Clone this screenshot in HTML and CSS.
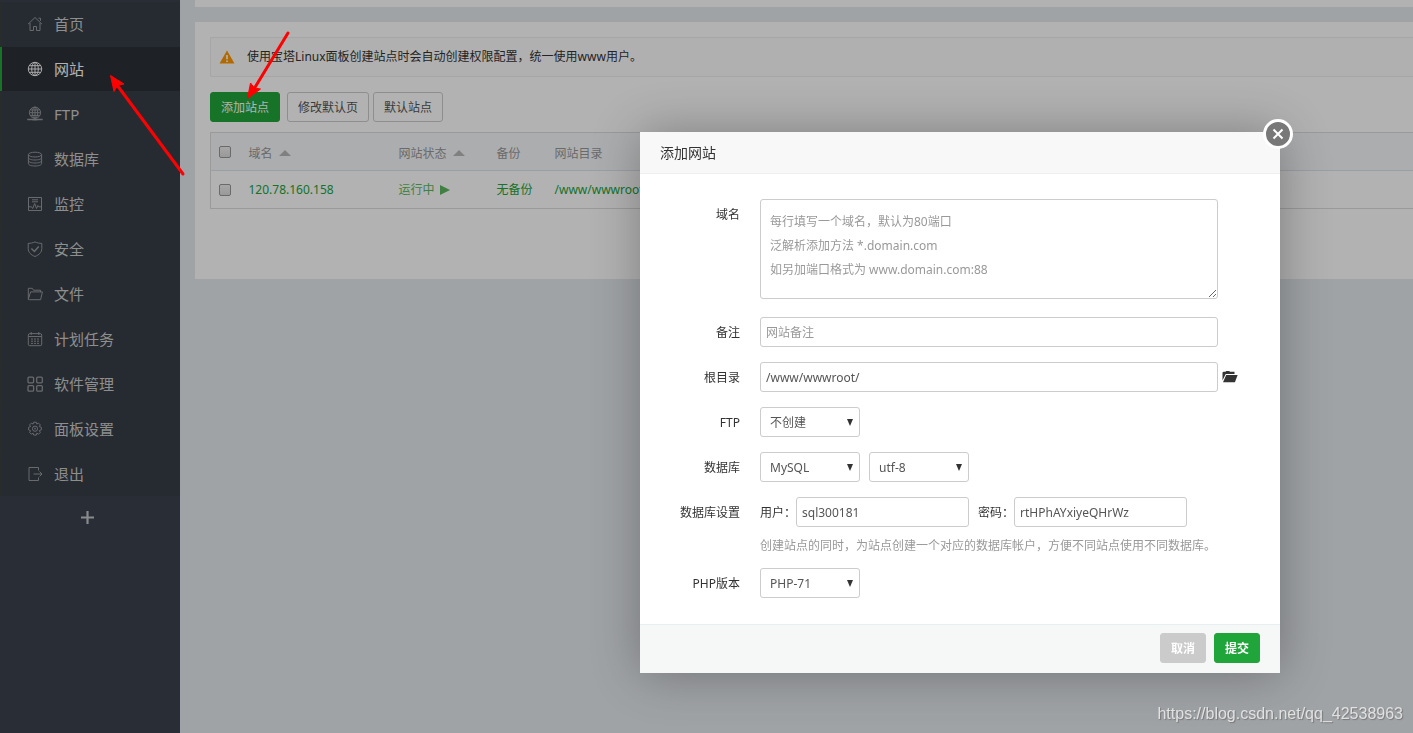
FILE: index.html
```html
<!DOCTYPE html>
<html lang="zh-CN">
<head>
<meta charset="utf-8">
<meta name="viewport" content="width=device-width, initial-scale=1">
<title>网站</title>
<link rel="stylesheet" href="styles.css">
</head>
<body>
<div class="app">
  <nav class="sidebar">
    <ul class="menu">
      <li><a href="#"><svg class="icon" viewBox="0 0 16 16"><path d="M1 8.2 8 1.5l7 6.7M3 7v7.5h3.5v-4h3v4H13V7M11.5 2.2h2v2.6"/></svg>首页</a></li>
      <li><a href="#" class="active"><svg class="icon" viewBox="0 0 16 16"><circle cx="8" cy="8" r="6.7"/><ellipse cx="8" cy="8" rx="3.3" ry="6.7"/><path d="M1.3 8h13.4M8 1.3v13.4M2.4 4.7h11.2M2.4 11.3h11.2"/></svg>网站</a></li>
      <li><a href="#"><svg class="icon" viewBox="0 0 16 16"><circle cx="8" cy="6.7" r="5.6"/><ellipse cx="8" cy="6.7" rx="2.7" ry="5.6"/><path d="M2.4 6.7h11.2M8 1.1v11.2M3.4 4h9.2M3.4 9.4h9.2"/><path class="thick" d="M.3 13.6h15.4M5.5 13.8h5"/></svg>FTP</a></li>
      <li><a href="#"><svg class="icon" viewBox="0 0 16 16"><ellipse cx="8" cy="3.6" rx="6.6" ry="2.4"/><path d="M1.4 3.6v9c0 1.4 2.8 2.4 6.6 2.4s6.600-1 6.600-2.400v-9M1.400 6.600C1.400 8 4.200 9 8 9s6.600-1 6.600-2.400M1.400 9.600C1.400 11 4.200 12 8 12s6.600-1 6.600-2.400"/></svg>数据库</a></li>
      <li><a href="#"><svg class="icon" viewBox="0 0 16 16"><path d="M1.5 1.5h13v13h-13zM5 3.8h6M5 5.800h6M1.500 10.800h3l1.200 1.700 2-5 1.800 5 1.300-3 1 1.300h2.700"/></svg>监控</a></li>
      <li><a href="#"><svg class="icon" viewBox="0 0 16 16"><path d="M8 .9c2 1 4.300 1.400 6.800 1.500v5.100c0 3.900-2.700 6.400-6.800 8-4.100-1.600-6.800-4.100-6.800-8V2.400C3.700 2.300 6 1.900 8 .9z"/><path class="thick" d="m4.400 7.500 3 3 4.300-4.900"/></svg>安全</a></li>
      <li><a href="#"><svg class="icon" viewBox="0 0 16 16"><path d="M1.300 13V2.300h4l1.200 1.900h7v2M1.300 13.300 3.600 5.900h11.800l-1.800 7.800H2.200c-.6 0-.9-.2-.9-.7"/></svg>文件</a></li>
      <li><a href="#"><svg class="icon" viewBox="0 0 16 16"><rect x="1.300" y="2.600" width="13.400" height="12.100" rx="1.500"/><path d="M1.300 5.500h13.400M4.200 1v3M11.800 1v3M4 8h2M7 8h2M10 8h2M4 10.200h2M7 10.200h2M10 10.200h2M4 12.400h2M7 12.400h2M10 12.400h2"/></svg>计划任务</a></li>
      <li><a href="#"><svg class="icon icon-bold" viewBox="0 0 16 16"><rect x="1" y="1.200" width="5.600" height="5.600" rx="1"/><rect x="9.700" y="1.200" width="5.600" height="5.600" rx="1"/><rect x="1" y="9.600" width="5.600" height="5.600" rx="1"/><rect x="9.700" y="9.600" width="5.600" height="5.600" rx="1"/></svg>软件管理</a></li>
      <li><a href="#"><svg class="icon" viewBox="0 0 16 16"><path d="m6.700 1.200h2.600l.5 1.900 1.700-1 1.800 1.800-1 1.700 2 .7v2.600l-2 .8 1 1.700-1.800 1.800-1.700-1-.5 1.900H6.700l-.6-1.900-1.700 1-1.800-1.800 1-1.700-2-.8V6.300l2-.7-1-1.700 1.800-1.800 1.700 1z"/><circle cx="8" cy="7.700" r="2.600"/><circle cx="8" cy="7.700" r=".5"/></svg>面板设置</a></li>
      <li><a href="#"><svg class="icon" viewBox="0 0 16 16"><path d="M11.500 4.500v-3H2v13h9.500v-3M6.500 8H15M12.500 5.500 15 8l-2.500 2.500"/></svg>退出</a></li>
    </ul>
    <button class="menu-add" type="button" aria-label="添加菜单"><svg viewBox="0 0 12 12"><path d="M6 0v12M0 6h12"/></svg></button>
  </nav>

  <main class="content">
    <div class="topbar"></div>
    <section class="panel">
      <p class="notice">
        <svg class="warn" viewBox="0 0 16 14"><path class="warn-body" d="M8 0.500 15.500 13.500H.5z"/><path class="warn-mark" d="M8 5v4.200M8 10.500v1.600"/></svg>
        <span>使用宝塔Linux面板创建站点时会自动创建权限配置<span class="mid">，</span>统一使用www用户。</span>
      </p>
      <div class="toolbar">
        <button class="btn btn-primary" type="button">添加站点</button>
        <button class="btn" type="button">修改默认页</button>
        <button class="btn" type="button">默认站点</button>
      </div>
      <table class="sites">
        <colgroup><col class="c-check"><col class="c-name"><col class="c-state"><col class="c-backup"><col></colgroup>
        <thead>
          <tr>
            <th><input type="checkbox" aria-label="全选"></th>
            <th>域名<i class="sort"></i></th>
            <th>网站状态<i class="sort"></i></th>
            <th>备份</th>
            <th>网站目录</th>
          </tr>
        </thead>
        <tbody>
          <tr>
            <td><input type="checkbox" aria-label="选择 120.78.160.158"></td>
            <td><a href="#">120.78.160.158</a></td>
            <td><a href="#" class="running">运行中<i class="play"></i></a></td>
            <td><a href="#">无备份</a></td>
            <td><a href="#">/www/wwwroot</a></td>
          </tr>
        </tbody>
      </table>
    </section>
  </main>
</div>

<div class="shade"></div>

<div class="dialog" role="dialog" aria-labelledby="dialog-title">
  <h2 class="dialog-title" id="dialog-title">添加网站</h2>
  <button class="dialog-close" type="button" aria-label="关闭"><svg viewBox="0 0 12 12"><path d="m1.500 1.500 9 9M10.500 1.500l-9 9"/></svg></button>
  <form class="form">
    <div class="row row-domain">
      <label for="domain">域名</label>
      <textarea id="domain" placeholder="每行填写一个域名，默认为80端口&#10;泛解析添加方法 *.domain.com&#10;如另加端口格式为 www.domain.com:88"></textarea>
    </div>
    <div class="row">
      <label for="remark">备注</label>
      <input class="wide" id="remark" type="text" placeholder="网站备注">
    </div>
    <div class="row">
      <label for="root">根目录</label>
      <input class="wide" id="root" type="text" value="/www/wwwroot/">
      <button class="browse" type="button" aria-label="选择目录"><svg viewBox="0 0 16 12"><path d="M.5 9.500V1.500L1.500.8h2L4.200 0h3l.8.8h4.500v2.100H3.700z"/><path d="M4.200 3.900H15.600L12.900 11.200H1z"/></svg></button>
    </div>
    <div class="row">
      <label for="ftp">FTP</label>
      <span class="select"><select id="ftp"><option>不创建</option></select></span>
    </div>
    <div class="row">
      <label for="db">数据库</label>
      <span class="select"><select id="db"><option>MySQL</option></select></span>
      <span class="select"><select aria-label="编码"><option>utf-8</option></select></span>
    </div>
    <div class="row">
      <span class="row-label">数据库设置</span>
      <div class="pair"><label for="user">用户<span class="mid">：</span></label><input id="user" type="text" value="sql300181"></div>
      <div class="pair"><label for="pass">密码<span class="mid">：</span></label><input id="pass" type="text" value="rtHPhAYxiyeQHrWz"></div>
      <p class="hint">创建站点的同时<span class="mid">，</span>为站点创建一个对应的数据库帐户<span class="mid">，</span>方便不同站点使用不同数据库。</p>
    </div>
    <div class="row">
      <label for="php">PHP版本</label>
      <span class="select"><select id="php"><option>PHP-71</option></select></span>
    </div>
  </form>
  <div class="dialog-foot">
    <button class="btn btn-cancel" type="button">取消</button>
    <button class="btn btn-primary" type="button">提交</button>
  </div>
</div>

<svg class="arrows" viewBox="0 0 300 190">
  <path class="shaft" d="M183 174 117 85M288 33 254 89"/>
  <path class="head" d="M110.500 75.500 124 84 117.500 85.500 114 91.500zM247.500 98.500 250.500 83 254.500 88 260.500 89z"/>
</svg>
<div class="watermark">https://blog.csdn.net/qq_42538963</div>
</body>
</html>
```
FILE: styles.css
```css
* { box-sizing: border-box; }

body {
  margin: 0;
  font: 12px/18px "Noto Sans", "Noto Sans CJK SC", sans-serif;
  color: #333;
  background: #e5eaee;
  overflow: hidden;
}

button, input, select, textarea { font: inherit; color: inherit; margin: 0; }
a { color: #20a53a; text-decoration: none; }
h2, p, ul { margin: 0; padding: 0; font-weight: normal; }

/* Full-width punctuation centred in its em box */
.mid { font-family: "Noto Sans CJK TC", sans-serif; line-height: 1; }

.app { display: flex; min-height: 100vh; }

/* Sidebar */
.sidebar { flex: 0 0 180px; padding-top: 2px; background: #3c434e; }
.menu { display: flex; flex-direction: column; gap: 1px; list-style: none; background: #373e47; }
.menu a {
  display: flex;
  align-items: center;
  gap: 11px;
  height: 44px;
  padding-left: 25px;
  border-left: 2px solid #3b403f;
  font-size: 15px;
  color: #ccc;
}
.menu a.active { color: #fff; background: #2c3138; border-left-color: #20a53a; }
.icon { width: 16px; height: 16px; fill: none; stroke: #95989d; stroke-width: 1; }
.icon .thick { stroke-width: 1.500; }
.icon-bold { stroke-width: 1.300; }
.active .icon { stroke: #f4f4f4; }
.menu-add { display: block; width: 100%; height: 43px; padding: 0 0 0 81px; border: 0; background: none; }
.menu-add svg { display: block; width: 13px; height: 13px; stroke: #c4c6c9; stroke-width: 2; }

/* Main area */
.content { flex: 1; min-width: 0; padding-left: 15px; }
.topbar { height: 7px; margin-bottom: 15px; background: #fff; }
.panel { padding: 15px 0 70px 15px; background: #fff; }
.notice {
  display: flex;
  align-items: center;
  gap: 12px;
  height: 40px;
  margin-bottom: 15px;
  padding-left: 8px;
  border: 1px solid #eee;
  border-right: 0;
  border-radius: 2px 0 0 2px;
  background: #fdfdfd;
}
.warn { width: 16px; height: 14px; }
.warn-body { fill: #ff9900; stroke: none; }
.warn-mark { fill: none; stroke: #fff; stroke-width: 1.700; }

.btn {
  height: 30px;
  padding: 1px 10px 0;
  border: 1px solid #ccc;
  border-radius: 3px;
  background: #fff;
  color: #555;
}
.btn-primary { border-color: #20a53a; background: #20a53a; color: #fff; }
.toolbar { display: flex; gap: 4px; margin-bottom: 10px; }
.toolbar .btn-primary { margin-right: 3px; }

.sites { width: 100%; table-layout: fixed; border-collapse: collapse; border: 1px solid #ddd; border-right: 0; }
.c-check { width: 30px; }
.c-name { width: 150px; }
.c-state { width: 98px; }
.c-backup { width: 58px; }
.sites th, .sites td { height: 38px; padding: 0 8px; text-align: left; font-weight: normal; white-space: nowrap; }
.sites th { padding-top: 4px; color: #999; background: #f6f8fa; border-bottom: 1px solid #dde4eb; }
.sites input {
  appearance: none;
  display: block;
  width: 12px;
  height: 12px;
  border: 1px solid #999;
  border-radius: 2px;
  background: linear-gradient(#f0f0f0, #dcdcdc);
}
.sites th input { margin-bottom: 4px; }
.sort {
  display: inline-block;
  margin: 0 0 2px 6px;
  border: 6px solid transparent;
  border-top: 0;
  border-bottom-color: #b8b8b8;
}
.play {
  display: inline-block;
  margin-left: 5px;
  border: 5px solid transparent;
  border-left: 10px solid #5cb85c;
  border-right: 0;
  vertical-align: -1px;
}
.running { color: #5cb85c; }

.shade { position: fixed; inset: 0; background: rgba(0, 0, 0, .3); }

/* Dialog */
.dialog {
  position: absolute;
  top: 132px;
  left: 640px;
  width: 640px;
  background: #fff;
  border-radius: 2px;
  box-shadow: 1px 1px 50px rgba(0, 0, 0, .3);
}
.dialog-title { height: 42px; padding-left: 20px; border-bottom: 1px solid #eee; background: #f8f8f8; font-size: 14px; line-height: 42px; }
.dialog-close {
  position: absolute;
  top: -13px;
  right: -13px;
  width: 30px;
  height: 30px;
  padding: 6px;
  border: 3px solid #fff;
  border-radius: 50%;
  background: #787878;
}
.dialog-close svg { display: block; width: 12px; height: 12px; fill: none; stroke: #fff; stroke-width: 2; }

.form { display: flex; flex-direction: column; gap: 15px; padding: 25px 20px 26px; }
.row { display: flex; flex-wrap: wrap; align-items: center; }
.row > label, .row-label { width: 80px; margin-right: 20px; padding-top: 2px; text-align: right; }
.row-domain { align-items: flex-start; margin-bottom: 3px; }
.row-domain > label { padding-top: 1px; line-height: 30px; }

.form input, .form select, .form textarea {
  height: 30px;
  padding: 0 5px;
  border: 1px solid #ccc;
  border-radius: 3px;
  background: #fff;
  color: #555;
}
.form input { width: 173px; }
.form .wide { width: 458px; }
.form textarea { display: block; width: 458px; height: 100px; padding: 10px 9px 8px; line-height: 24px; resize: both; }
.form ::placeholder { color: #999; opacity: 1; }

.select { position: relative; margin-right: 9px; }
.form select { display: block; width: 100px; padding: 1px 9px 0; appearance: none; }
.select::after {
  content: "";
  position: absolute;
  top: 12px;
  right: 7px;
  border: 3px solid transparent;
  border-top: 7px solid #333;
  border-bottom: 0;
  pointer-events: none;
}
.pair { display: flex; align-items: center; margin-right: 9px; }
.pair label { padding-top: 2px; }
.hint { flex: 1 0 100%; margin-top: 11px; padding-left: 100px; line-height: 15px; color: #999; }
.browse { padding: 0; margin-left: 4px; border: 0; background: none; }
.browse svg { display: block; width: 16px; height: 12px; fill: #333; }

.dialog-foot { display: flex; justify-content: flex-end; gap: 8px; padding: 8px 20px 10px; border-top: 1px solid #e7efef; background: #f6f8f8; }
.dialog-foot .btn { font-weight: bold; }
.btn-cancel { border-color: #cbcbcb; background: #cbcbcb; color: #fff; }

/* Annotations */
.arrows { position: absolute; top: 0; left: 0; width: 300px; height: 190px; pointer-events: none; }
.shaft { fill: none; stroke: #f00; stroke-width: 3; stroke-linecap: round; }
.head { fill: #f00; stroke: #f00; }
.watermark {
  position: absolute;
  right: 10px;
  bottom: 9px;
  font: 16px/20px "Liberation Sans", Arial, sans-serif;
  color: #e0e1e2;
  text-shadow: 1px 1px 1px #777;
}
```
